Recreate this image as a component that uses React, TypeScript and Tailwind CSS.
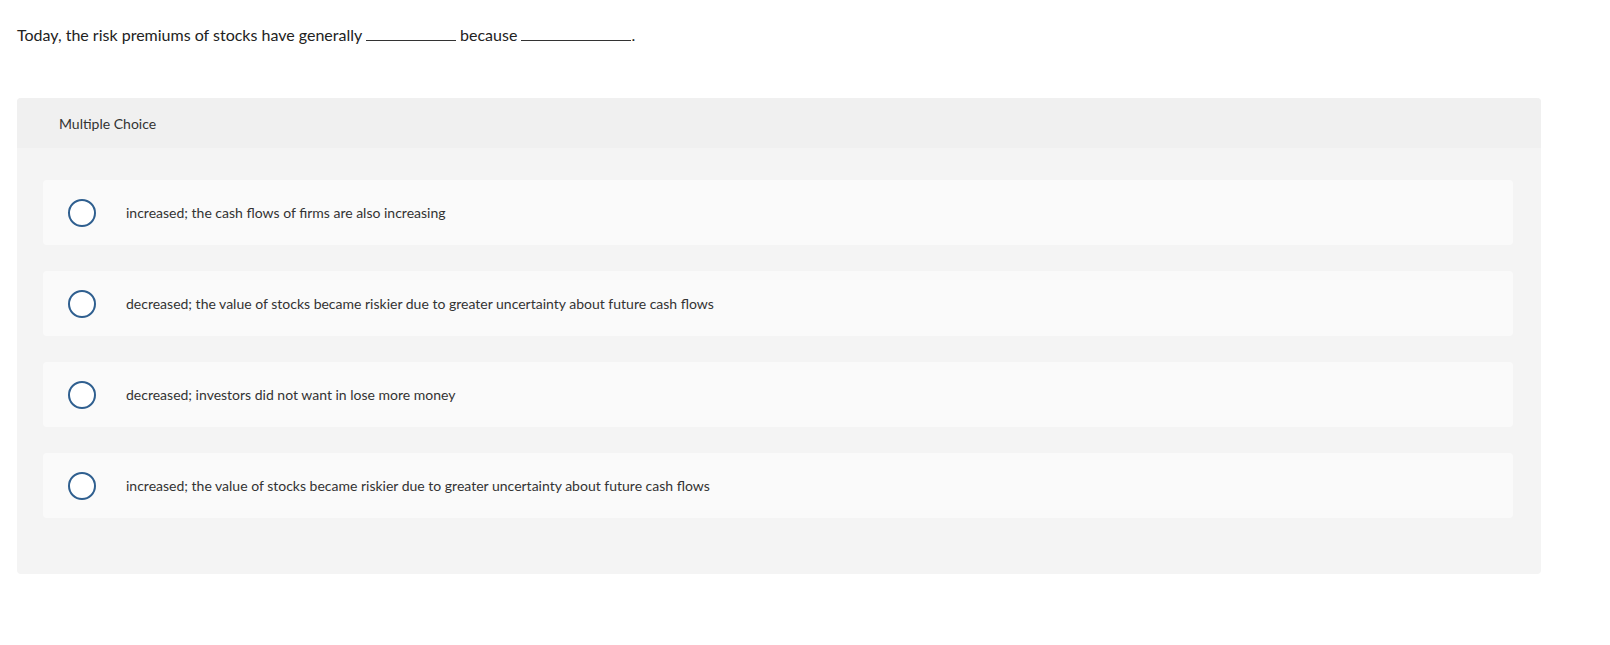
import React from 'react';

const choices = [
  'increased; the cash flows of firms are also increasing',
  'decreased; the value of stocks became riskier due to greater uncertainty about future cash flows',
  'decreased; investors did not want in lose more money',
  'increased; the value of stocks became riskier due to greater uncertainty about future cash flows',
];

function Blank({ width }: { width: string }) {
  return <span className={`inline-block border-b border-[#333] align-baseline ${width}`} />;
}

export default function App() {
  return (
    <div className="min-h-screen bg-white font-['Lato','Liberation_Sans',sans-serif] text-[#333]">
      <p className="pl-[17px] pt-[25px] text-[16px] leading-[20px] text-[#222]">
        Today, the risk premiums of stocks have generally <Blank width="w-[90px]" /> because{' '}
        <Blank width="w-[110px]" />.
      </p>

      <div className="ml-[17px] mt-[53px] w-[1524px] overflow-hidden rounded bg-[#f4f4f4]">
        <div className="flex h-[50px] items-center bg-[#f0f0f0] pl-[42px] text-[14px] text-[#333]">
          Multiple Choice
        </div>
        <div className="flex flex-col gap-[26px] pb-[56px] pl-[26px] pr-[28px] pt-[32px]">
          {choices.map((c) => (
            <label
              key={c}
              className="flex h-[65px] cursor-pointer items-center rounded bg-[#fafafa] pl-[25px]"
            >
              <span className="h-[28px] w-[28px] shrink-0 rounded-full border-2 border-[#2f5f8f] bg-white" />
              <span className="ml-[30px] text-[14px] text-[#333]">{c}</span>
            </label>
          ))}
        </div>
      </div>
    </div>
  );
}
